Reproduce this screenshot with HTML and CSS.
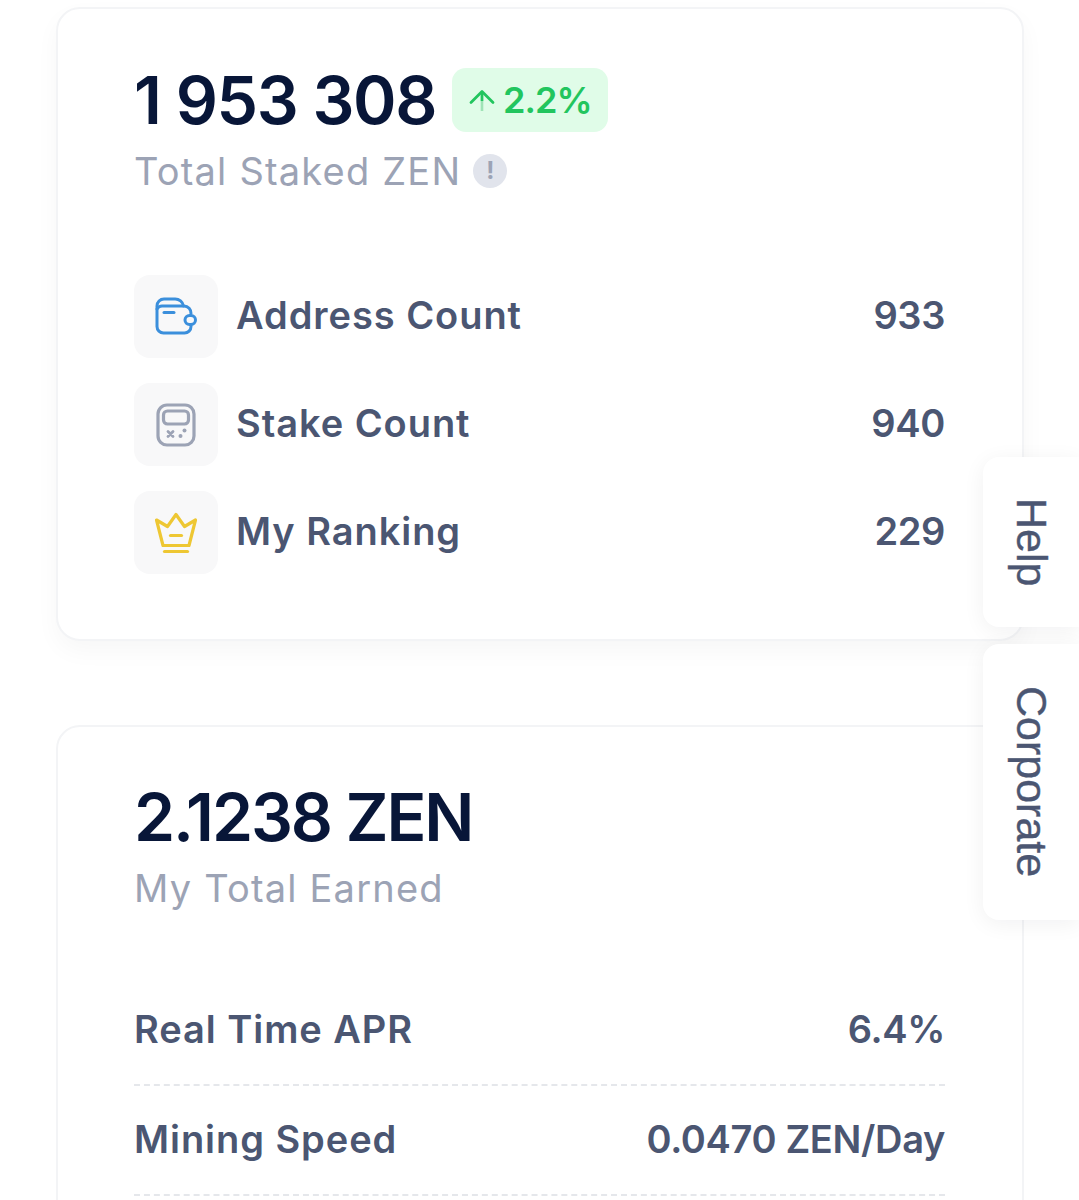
FILE: index.html
```html
<!DOCTYPE html>
<html lang="en">
<head>
<meta charset="utf-8">
<title>Staking</title>
<link rel="stylesheet" href="styles.css">
</head>
<body>
<main class="page">
  <section class="card card-stats">
    <div class="headline">
      <span class="big">1 953 308</span>
      <span class="badge">
        <svg class="badge-arrow" viewBox="0 0 28 28" width="28" height="28" fill="none"><path d="M14 7V25" stroke="#9fe3b6" stroke-width="2.6"/><path d="M14 7V15" stroke="#22c55e" stroke-width="2.6"/><path d="M3 16.500L14 5.500L25 16.500" stroke="#22c55e" stroke-width="2.8" stroke-linecap="round" stroke-linejoin="round"/></svg>
        <span>2.2%</span>
      </span>
    </div>
    <div class="sub">
      <span>Total Staked ZEN</span>
      <span class="info">!</span>
    </div>
    <ul class="stat-list">
      <li class="stat">
        <span class="icon-box">
          <svg viewBox="0 0 44 40" width="44" height="40" fill="none" stroke="#3b8fdc" stroke-width="3" stroke-linecap="round" stroke-linejoin="round"><path d="M37 28.500v1a6.500 6.500 0 0 1-6.500 6.500H9.500A6.500 6.500 0 0 1 3 29.500V9a7 7 0 0 1 7-7h11a8.500 8.500 0 0 1 8.500 7"/><path d="M3 12a6 6 0 0 1 6-3h21a7 7 0 0 1 7 7.500"/><path d="M10 15.500h10"/><rect x="31" y="18.500" width="10.500" height="9" rx="4.500"/></svg>
        </span>
        <span class="stat-label">Address Count</span>
        <span class="stat-value">933</span>
      </li>
      <li class="stat">
        <span class="icon-box">
          <svg viewBox="0 0 40 44" width="40" height="44" fill="none" stroke="#9ca3b5" stroke-width="3.200" stroke-linecap="round" stroke-linejoin="round"><rect x="2" y="2" width="36" height="40" rx="9"/><rect x="7.500" y="8" width="25" height="13" rx="4"/><path d="M12 28.500l5 5M17 28.500l-5 5" stroke-width="2.800"/><circle cx="28.500" cy="27.500" r="2" fill="#9ca3b5" stroke="none"/><circle cx="24.500" cy="33" r="2" fill="#9ca3b5" stroke="none"/></svg>
        </span>
        <span class="stat-label">Stake Count</span>
        <span class="stat-value">940</span>
      </li>
      <li class="stat">
        <span class="icon-box">
          <svg viewBox="0 0 46 42" width="46" height="42" fill="none" stroke="#eec733" stroke-width="3.200" stroke-linecap="round" stroke-linejoin="round"><path d="M10 33.500 3.500 8l11 6.500L23 2.500 31.500 14.500 42.500 8 36 33.500z"/><path d="M17.500 23.500h11"/><path d="M11.500 39.500h23"/></svg>
        </span>
        <span class="stat-label">My Ranking</span>
        <span class="stat-value">229</span>
      </li>
    </ul>
  </section>

  <section class="card card-earned">
    <div class="big big-tight">2.1238 ZEN</div>
    <div class="sub">My Total Earned</div>
    <dl class="rows">
      <div class="row">
        <dt>Real Time APR</dt>
        <dd>6.4%</dd>
      </div>
      <div class="row">
        <dt>Mining Speed</dt>
        <dd>0.0470 ZEN/Day</dd>
      </div>
    </dl>
  </section>
</main>

<aside class="side-tabs">
  <a class="side-tab side-help">Help</a>
  <a class="side-tab side-corp">Corporate</a>
</aside>
</body>
</html>
```

FILE: styles.css
```css
* { box-sizing: border-box; }
html, body { margin: 0; padding: 0; }
body {
  width: 1079px;
  height: 1200px;
  overflow: hidden;
  background: #fff;
  font-family: Inter, "Liberation Sans", sans-serif;
  position: relative;
}
.page {
  padding: 7px 55px 0 56px;
  display: flex;
  flex-direction: column;
  gap: 84px;
}
.card {
  border: 2px solid #f3f4f6;
  border-radius: 24px;
  background: #fff;
  padding: 53px 77px 0 76px;
}
.card-stats {
  height: 634px;
  box-shadow: 0 10px 24px rgba(17, 24, 39, 0.035);
}
.card-earned {
  height: 600px;
  padding-top: 52px;
}
.headline {
  display: flex;
  align-items: center;
  gap: 16px;
}
.big {
  font-size: 66px;
  line-height: 76px;
  font-weight: 600;
  letter-spacing: -1.400px;
  color: #081638;
  white-space: nowrap;
}
.big-tight { letter-spacing: -2.100px; }
.badge {
  display: inline-flex;
  align-items: center;
  gap: 7px;
  height: 64px;
  padding: 0 16px 0 16px;
  border-radius: 14px;
  background: #e0fce8;
  color: #22c55e;
  font-size: 36px;
  font-weight: 600;
  letter-spacing: -1px;
  margin-top: 0;
}
.badge-arrow { flex: none; }
.sub {
  display: flex;
  align-items: center;
  gap: 12px;
  margin-top: 10px;
  font-size: 38px;
  line-height: 46px;
  color: #9ca3b5;
  font-weight: 400;
  letter-spacing: 1.200px;
}
.info {
  width: 34px;
  height: 34px;
  border-radius: 50%;
  background: #e1e4ec;
  color: #9ca3b5;
  font-size: 24px;
  line-height: 34px;
  font-weight: 700;
  text-align: center;
  letter-spacing: 0;
}
.stat-list {
  list-style: none;
  margin: 81px 0 0;
  padding: 0;
  display: flex;
  flex-direction: column;
  gap: 25px;
}
.stat {
  display: flex;
  align-items: center;
  height: 83px;
}
.icon-box {
  width: 84px;
  height: 83px;
  border-radius: 16px;
  background: #f8f8f9;
  display: flex;
  align-items: center;
  justify-content: center;
  flex: none;
}
.stat-label {
  margin-left: 18px;
  flex: 1;
}
.stat-label, .stat-value, .row dt, .row dd {
  font-size: 38px;
  font-weight: 600;
  color: #4b5672;
  white-space: nowrap;
}
.stat-label, .stat-value { padding-bottom: 3px; }
.stat-label, .row dt { letter-spacing: 0.950px; }
.stat-value, .row dd { letter-spacing: -0.350px; }
.rows {
  margin: 65px 0 0;
}
.row {
  display: flex;
  justify-content: space-between;
  align-items: center;
  height: 110px;
  border-bottom: 2px dashed #e5e7eb;
  padding-bottom: 2px;
}
.row dt, .row dd { margin: 0; }
.side-tabs {
  position: absolute;
  left: 983px;
  top: 457px;
  width: 96px;
  display: flex;
  flex-direction: column;
  gap: 17px;
}
.side-tab {
  display: flex;
  align-items: center;
  justify-content: center;
  writing-mode: vertical-rl;
  background: #fff;
  border-radius: 16px 0 0 16px;
  box-shadow: 0 4px 22px rgba(17, 24, 39, 0.06);
  font-family: "Liberation Sans", sans-serif;
  font-size: 43px;
  -webkit-text-stroke: 0.4px #4b5672;
  color: #4b5672;
}
.side-help { height: 170px; }
.side-corp { height: 276px; }
```
